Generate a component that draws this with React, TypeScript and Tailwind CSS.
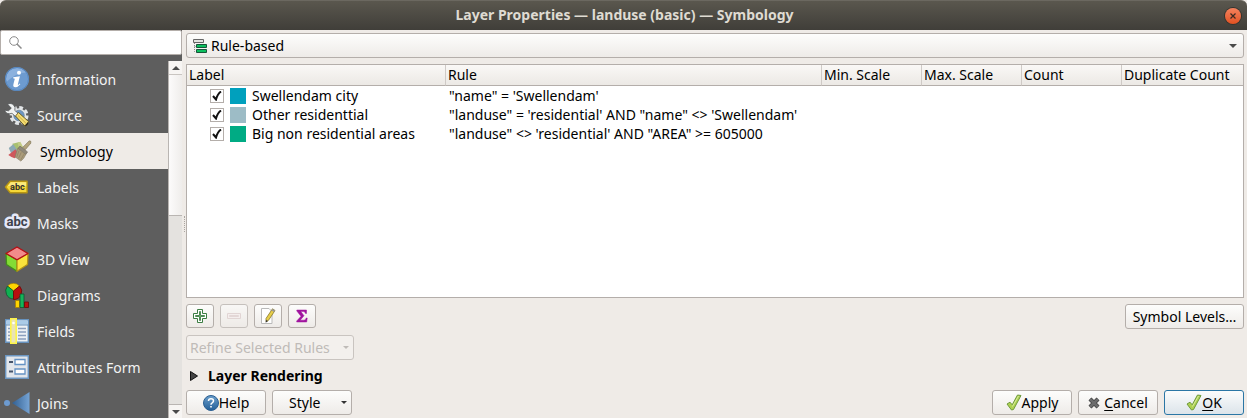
import { useState } from "react";
import type { ReactNode } from "react";

function InfoIcon() {
  return (
    <svg width="24" height="24" viewBox="0 0 24 24" aria-hidden="true">
      <circle cx="12" cy="12" r="12" fill="#6d9bd0" />
      <path d="M1 12A11 11 0 0 1 21 5.800C15 5 8 9 1.500 15Z" fill="#8bb1de" />
      <circle cx="12" cy="12" r="11.500" fill="none" stroke="#5586bf" />
      <circle cx="14" cy="5.700" r="2" fill="#fff" />
      <path d="M8.300 10.200 14.900 9.200 12.900 17.200Q12.700 18.300 13.400 17.700L14.800 16.600 15.300 17.200Q12.800 20.200 10.300 20.200 7.700 20.200 8.400 17.300L9.800 11.700 8.100 11.300Z" fill="#fff" />
    </svg>
  );
}

function SourceIcon() {
  return (
    <svg width="25" height="24" viewBox="0 0 25 24" aria-hidden="true">
      <circle cx="15" cy="12.500" r="8" fill="none" stroke="#e3e6e8" strokeWidth="3" strokeDasharray="3.800 2.480" />
      <circle cx="15" cy="12.500" r="7.200" fill="#e3e6e8" />
      <circle cx="15" cy="12.500" r="5.300" fill="#6d97c4" stroke="#5b7590" strokeWidth=".6" />
      <path d="M3.500 1Q9-1 11 4.500L10.800 7.500 15 11 12 14 8 10.300Q2.500 12 .500 7.200L4.500 7.800 7.300 5.200Z" fill="#f0f2f2" stroke="#4a4e50" strokeWidth=".7" />
      <path d="M11.500 13 14.500 9.500 24.500 18.500Q24.500 22 21 23.300Z" fill="#f3dc74" stroke="#62541d" strokeWidth=".9" />
      <path d="m14 12.500 8 7.800" stroke="#cfae3a" />
      <path d="m20.500 22.800 3.700-4v2Q23.500 23 20.500 23Z" fill="#222" />
    </svg>
  );
}

function SymbologyIcon() {
  return (
    <svg width="28" height="24" viewBox="0 0 28 24" aria-hidden="true">
      <path d="m6 4 8-2 4 7-9 4Z" fill="#a9c070" />
      <path d="M2 8.500 7 4.500l6 9-8 2Z" fill="#8ba9b5" />
      <path d="m1.500 16.500 8-6.500 4 6-5 4Q5 19 1.500 16.500Z" fill="#cf575c" />
      <path d="m12 3 3-1.500 3 6-4 3Z" fill="#c2cc85" />
      <path d="M24.800.700Q27.500.200 26.700 3.200L20.500 10.500 17.500 8Z" fill="#b3a47c" stroke="#81765b" strokeWidth=".7" />
      <path d="m14.500 6.500 8.500 6.500-2 3-8.500-7Z" fill="#90897a" stroke="#6d675c" strokeWidth=".7" />
      <path d="m12 9 9 7Q19 21 15.500 23.300L9 18.500Q10.500 14 12 9Z" fill="#ab9c7b" stroke="#827961" strokeWidth=".7" />
      <path d="m13.500 11.500-2.500 7m5-5-3 6.500m6-4.500L15.500 22" stroke="#887c60" strokeWidth=".7" />
    </svg>
  );
}

function LabelsIcon() {
  return (
    <svg width="26" height="24" viewBox="0 0 26 24" aria-hidden="true">
      <path d="M6.500 6H24v12H6.500L1.500 12Z" fill="#f5d738" stroke="#b89612" strokeWidth="1.400" strokeLinejoin="round" />
      <path d="M7 7h16v4H4Z" fill="#fbea7c" />
      <text x="14" y="15" textAnchor="middle" fontFamily="Roboto, sans-serif" fontSize="9.500" fontWeight="700" fill="#333">abc</text>
    </svg>
  );
}

function MasksIcon() {
  return (
    <svg width="28" height="24" viewBox="0 0 28 24" aria-hidden="true" className="shrink-0">
      <text x="14" y="15" textAnchor="middle" fontFamily="Roboto, sans-serif" fontSize="13" fontWeight="700" fill="#3e424b" stroke="#e6e9f8" strokeWidth="5" strokeLinejoin="round" paintOrder="stroke">abc</text>
    </svg>
  );
}

function CubeIcon() {
  return (
    <svg width="24" height="26" viewBox="0 0 24 26" aria-hidden="true" strokeLinejoin="round" strokeWidth="1.300">
      <path d="M1 7.500 12 14v11.300L1.500 18.500Z" fill="#83dc35" stroke="#43901a" />
      <path d="M23 7.500 12 14v11.300L22.500 18.500Z" fill="#fae33c" stroke="#b49416" />
      <path d="M12 1 23 7.500 12 13.700 1 7.500Z" fill="#f18b8b" stroke="#b50e14" />
    </svg>
  );
}

function DiagramsIcon() {
  return (
    <svg width="24" height="25" viewBox="0 0 24 25" aria-hidden="true">
      <path d="M8.500 8 2.500 3A8 8 0 0 1 14.500 3Z" fill="#ffd500" stroke="#a5820a" strokeWidth=".7" />
      <path d="M8.500 8v8A8 8 0 0 1 2.500 3Z" fill="#10b052" stroke="#10542d" strokeWidth=".8" />
      <path d="M8.500 8v8.500A8 8 0 0 0 14.500 3Z" fill="#b80f0f" stroke="#690606" strokeWidth=".8" />
      <path d="M10.500 17.500h4v7h-4z" fill="#ffd500" stroke="#a88007" strokeWidth=".8" />
      <path d="M15 11h4v13.500h-4z" fill="#14b45a" stroke="#10542d" strokeWidth=".8" />
      <path d="M19.500 19h4v5.500h-4z" fill="#b80f0f" stroke="#690606" strokeWidth=".8" />
    </svg>
  );
}

function FieldsIcon() {
  return (
    <svg width="24" height="26" viewBox="0 0 24 26" aria-hidden="true">
      <path d="M.7 1.700h22.600v22.600H.7z" fill="#eef1f4" stroke="#6792bd" strokeWidth="1.400" />
      <path d="M1.500 2.500h21v4h-21z" fill="#aacbe8" />
      <path d="M1 7h22" stroke="#6792bd" />
      <path d="M3 10.500h18M3 14h18M3 17.500h18M3 21h18" stroke="#8b9fbd" strokeWidth="1.300" strokeDasharray="9 1" />
      <path d="M5.800.800h5.400v24.400H5.800z" fill="#e9e3b5" stroke="#fcf34a" strokeWidth="1.600" />
      <circle cx="8.500" cy="5" r="1.300" fill="#fff" />
    </svg>
  );
}

function FormIcon() {
  return (
    <svg width="24" height="24" viewBox="0 0 24 24" aria-hidden="true">
      <path d="M.7.7h22.600v22.600H.7z" fill="#e2e6eb" stroke="#6c96c1" strokeWidth="1.400" />
      <path d="M10 4.500h10v5H10zM10 14h10v5H10z" fill="#fff" stroke="#6592c4" strokeWidth="1.300" />
      <path d="M4 7h4M4 16.500h4" stroke="#45546b" strokeWidth="2" />
    </svg>
  );
}

function JoinsIcon() {
  return (
    <svg width="28" height="24" viewBox="0 0 28 24" aria-hidden="true" className="shrink-0">
      <defs>
        <linearGradient id="join-fill">
          <stop stopColor="#315f91" />
          <stop offset="1" stopColor="#75a3d4" />
        </linearGradient>
      </defs>
      <circle cx="4" cy="12" r="3" fill="#6d9bd0" />
      <path d="M26.500 1v22L9 12Z" fill="url(#join-fill)" />
    </svg>
  );
}

function CheckIcon() {
  return (
    <svg width="16" height="17" viewBox="0 0 16 17" aria-hidden="true">
      <path d="M1 10 4 8.200 6.200 10.800 11.500 1 15 1.500 7.500 15.500 5.500 16Z" fill="#add152" stroke="#6f9a3c" strokeLinejoin="round" />
      <path d="m6.500 12.500 6-10.500" stroke="#d8ea9e" />
    </svg>
  );
}

function CrossIcon() {
  return (
    <svg width="12" height="12" viewBox="0 0 12 12" aria-hidden="true">
      <path d="m2 2 8 8m0-8-8 8" stroke="#3f3f3f" strokeWidth="4.200" />
      <path d="m2 2 8 8m0-8-8 8" stroke="#6c6c6c" strokeWidth="2.700" />
    </svg>
  );
}

function HelpIcon() {
  return (
    <svg width="16" height="16" viewBox="0 0 16 16" aria-hidden="true">
      <defs>
        <linearGradient id="help-fill" x2="0" y2="1">
          <stop stopColor="#6c9fcb" />
          <stop offset="1" stopColor="#235f98" />
        </linearGradient>
      </defs>
      <circle cx="8" cy="8" r="7.500" fill="url(#help-fill)" stroke="#2b5f92" />
      <path d="M5.500 6Q5.500 3.800 8 3.800T10.500 6Q10.500 7 9.200 7.800 8 8.500 8 9.800" fill="none" stroke="#fff" strokeWidth="1.500" />
      <path d="M7.200 11h1.600v1.600H7.200z" fill="#fff" />
    </svg>
  );
}

function RuleIcon() {
  return (
    <svg width="14" height="14" viewBox="0 0 14 14" aria-hidden="true">
      <path d="M.5.500h10v3H.5z" fill="#e3e3df" stroke="#666" />
      <path d="M1.500 4v8.500H4M1.500 7.500H4" fill="none" stroke="#888" strokeDasharray="1 1" />
      <path d="M3.500 5.500h10v3h-10zM3.500 10.500h10v3h-10z" fill="#0cc05e" stroke="#17553a" />
    </svg>
  );
}

function PlusIcon() {
  return (
    <svg width="14" height="14" viewBox="0 0 14 14" aria-hidden="true">
      <path d="M4.500.500h5v4h4v5h-4v4h-5v-4h-4v-5h4z" fill="#fff" stroke="#3c7d43" />
      <path d="M6.500 2.500h1v4h4v1h-4v4h-1v-4h-4v-1h4z" fill="#8fca94" stroke="#4d8b53" />
    </svg>
  );
}

function MinusIcon() {
  return (
    <svg width="14" height="14" viewBox="0 0 14 14" aria-hidden="true">
      <path d="M.5 4.500h13v5H.5z" fill="#f7f0f0" stroke="#dccccc" />
      <path d="M2.500 6.500h9v1h-9z" fill="none" stroke="#dfcfcf" />
    </svg>
  );
}

function EditIcon() {
  return (
    <svg width="16" height="16" viewBox="0 0 16 16" aria-hidden="true">
      <path d="M1.500.500h7.500l3 3v12H1.500z" fill="#fff" stroke="#b9b9b9" />
      <path d="m12.500.800 2.500 1.700-6.500 9.800L6 13.800 6 10.500Z" fill="#e8cf4a" stroke="#857529" strokeWidth=".8" />
      <path d="m12.500.800 2.500 1.700-1 1.600-2.500-1.700Z" fill="#999" />
      <path d="m6 12-.3 2.800L8 13Z" fill="#333" />
    </svg>
  );
}

function SigmaIcon() {
  return (
    <svg width="12" height="14" viewBox="0 0 12 14" aria-hidden="true">
      <path d="M.8 1h9.700v3.500H9.500Q9.200 2.600 7.500 2.600H4.800L8 6.700 4.200 11.200H8Q9.800 11.200 10.200 9H11.200L10.700 13H.7V12L5 7.300.8 2Z" fill="#a0149f" stroke="#a0149f" strokeWidth=".5" />
    </svg>
  );
}

function Caret({ up = false }: { up?: boolean }) {
  return (
    <svg width="8" height="4" viewBox="0 0 8 4" aria-hidden="true">
      <path d={up ? "M0 4h8L4 0Z" : "M0 0h8L4 4Z"} fill="currentColor" />
    </svg>
  );
}

const sections: { name: string; icon: ReactNode }[] = [
  { name: "Information", icon: <InfoIcon /> },
  { name: "Source", icon: <SourceIcon /> },
  { name: "Symbology", icon: <SymbologyIcon /> },
  { name: "Labels", icon: <LabelsIcon /> },
  { name: "Masks", icon: <MasksIcon /> },
  { name: "3D View", icon: <CubeIcon /> },
  { name: "Diagrams", icon: <DiagramsIcon /> },
  { name: "Fields", icon: <FieldsIcon /> },
  { name: "Attributes Form", icon: <FormIcon /> },
  { name: "Joins", icon: <JoinsIcon /> },
];

const rules = [
  { label: "Swellendam city", swatch: "bg-[#00a0bd]", rule: "\"name\" = 'Swellendam'" },
  { label: "Other residenttial", swatch: "bg-[#9dbcc6]", rule: "\"landuse\" = 'residential' AND \"name\" <> 'Swellendam'" },
  { label: "Big non residential areas", swatch: "bg-[#00ab84]", rule: "\"landuse\" <> 'residential' AND \"AREA\" >= 605000" },
];

const columns = ["Label", "Rule", "Min. Scale", "Max. Scale", "Count", "Duplicate Count"];

const face = "flex items-center rounded-[3px] border border-[#b4aeaa] bg-linear-to-b from-[#fdfdfc] to-[#eeebe8]";

function Sidebar() {
  const [active, setActive] = useState("Symbology");
  return (
    <aside className="flex w-[182px] shrink-0 flex-col bg-[#5e5e5e]">
      <label className="flex h-[25px] shrink-0 items-center rounded-xs border border-[#b4aeaa] bg-white pl-2 text-[#8a8a8a]">
        <svg width="13" height="13" viewBox="0 0 13 13" fill="none" stroke="currentColor" aria-hidden="true">
          <circle cx="5" cy="5" r="4.300" />
          <path d="m8 8 4.500 4.500" strokeWidth="1.500" />
        </svg>
        <input type="search" aria-label="Search" className="min-w-0 flex-1 bg-transparent px-1 text-black outline-none" />
      </label>
      <div className="flex min-h-0 flex-1 pt-1.5">
        <nav className="min-w-0 flex-1 overflow-y-auto [scrollbar-width:none]">
          {sections.map(({ name, icon }) => (
            <button
              key={name}
              type="button"
              onClick={() => setActive(name)}
              className={
                active === name
                  ? "flex h-9 w-full items-center gap-2 bg-[#efebe7] pl-[7px] text-left whitespace-nowrap text-black"
                  : "flex h-9 w-full items-center gap-2 pl-1 text-left whitespace-nowrap text-[#f3f3f3]"
              }
            >
              <span className="flex w-[25px] shrink-0 justify-center">{icon}</span>
              <span className="pt-0.5">{name}</span>
            </button>
          ))}
        </nav>
        <div className="flex w-3.5 shrink-0 flex-col border-l border-[#b9b5b2] bg-[#e4e2df] text-[#4a4a4a]">
          <button type="button" aria-label="Scroll up" className="flex h-3.5 shrink-0 items-center justify-center border-b border-[#c9c5c1] bg-[#f7f5f3]">
            <Caret up />
          </button>
          <div className="min-h-0 flex-1">
            <div className="h-[43%] border-b border-[#b9b5b2] bg-linear-to-r from-[#fcfbfb] to-[#efedeb]" />
          </div>
          <button type="button" aria-label="Scroll down" className="flex h-3.5 shrink-0 items-center justify-center border-t border-[#b9b5b2] bg-[#f7f5f3]">
            <Caret />
          </button>
        </div>
      </div>
    </aside>
  );
}

function RuleTable() {
  return (
    <div className="min-h-0 flex-1 overflow-hidden border border-[#b4aeaa] bg-white">
      <table className="w-full table-fixed border-separate border-spacing-0 text-left whitespace-nowrap">
        <colgroup>
          <col className="w-[259px]" />
          <col className="w-[376px]" />
          <col className="w-[100px]" />
          <col className="w-[100px]" />
          <col className="w-[100px]" />
          <col />
        </colgroup>
        <thead>
          <tr className="bg-linear-to-b from-[#faf8f6] to-[#ebe8e4]">
            {columns.map((name) => (
              <th key={name} scope="col" className="h-[21px] border-r border-b border-r-[#cfcac6] border-b-[#b4aeaa] p-0 pl-0.5 leading-5 font-normal last:border-r-0">
                {name}
              </th>
            ))}
          </tr>
        </thead>
        <tbody>
          {rules.map(({ label, swatch, rule }) => (
            <tr key={label}>
              <td className="h-[19px] p-0">
                <label className="flex h-[19px] items-center pl-[23px]">
                  <span className="grid size-3.5 place-items-center">
                    <input type="checkbox" defaultChecked className="peer col-start-1 row-start-1 size-3.5 appearance-none border border-[#b4aeaa] bg-white" />
                    <svg width="10" height="10" viewBox="0 0 10 10" fill="none" stroke="#111" strokeWidth="2" aria-hidden="true" className="pointer-events-none col-start-1 row-start-1 hidden peer-checked:block">
                      <path d="M1 5 4 8.500Q5.500 3 9 .500" />
                    </svg>
                  </span>
                  <span className={`mr-1.5 ml-1.5 size-4 ${swatch}`} />
                  {label}
                </label>
              </td>
              <td className="p-0 pl-[3px]"><span className="flex h-[19px] items-center">{rule}</span></td>
              <td className="p-0" />
              <td className="p-0" />
              <td className="p-0" />
              <td className="p-0" />
            </tr>
          ))}
        </tbody>
      </table>
    </div>
  );
}

export default function App() {
  return (
    <div className="flex h-screen flex-col overflow-hidden bg-[#efebe7] font-['Noto_Sans',sans-serif] text-sm leading-5 text-black">
      <header className="flex h-[30px] shrink-0 items-center rounded-t-md border-t border-[#6b6860] bg-linear-to-b from-[#5a574e] to-[#403e39] pr-1.5 pl-6">
        <h1 className="flex-1 pb-0.5 text-center font-bold text-[#dfdbd2]">Layer Properties — landuse (basic) — Symbology</h1>
        <button type="button" aria-label="Close" className="flex size-4 items-center justify-center rounded-full bg-linear-to-b from-[#f5825d] to-[#e2511f] ring-1 ring-[#35332e]">
          <svg width="6" height="6" viewBox="0 0 6 6" stroke="#3b2a22" strokeWidth="1.200" aria-hidden="true">
            <path d="m.5.500 5 5m0-5-5 5" />
          </svg>
        </button>
      </header>
      <div className="flex min-h-0 flex-1">
        <Sidebar />
        <div className="flex w-1 shrink-0 items-center">
          <div className="ml-0.5 h-4 border-l border-dotted border-[#aaa5a0]" />
        </div>
        <main className="flex min-w-0 flex-1 flex-col pt-[3px] pr-[3px] pb-[3px]">
          <div className="mb-1.5 grid shrink-0 items-center">
            <select aria-label="Renderer" className="col-start-1 row-start-1 h-[25px] w-full appearance-none rounded-[3px] border border-[#b4aeaa] bg-linear-to-b from-[#fdfdfc] to-[#eeebe8] pr-6 pl-6">
              <option>Rule-based</option>
            </select>
            <span className="pointer-events-none col-start-1 row-start-1 flex items-center justify-between pr-[7px] pl-[7px] text-[#4a4a4a]">
              <RuleIcon />
              <Caret />
            </span>
          </div>
          <RuleTable />
          <div className="mt-1.5 flex shrink-0 items-start gap-1.5">
            <button type="button" aria-label="Add rule" className={`${face} h-6 w-7 justify-center`}><PlusIcon /></button>
            <button type="button" aria-label="Remove rule" disabled className={`${face} h-6 w-7 justify-center opacity-70`}><MinusIcon /></button>
            <button type="button" aria-label="Edit rule" className={`${face} h-6 w-7 justify-center`}><EditIcon /></button>
            <button type="button" aria-label="Count features" className={`${face} h-6 w-7 justify-center`}><SigmaIcon /></button>
            <button type="button" className={`${face} ml-auto h-[25px] w-[119px] justify-center`}>Symbol Levels…</button>
          </div>
          <button type="button" disabled className="mt-1.5 flex h-[25px] w-[168px] shrink-0 items-center justify-between rounded-[3px] border border-[#c9c4c0] bg-[#f3f0ed] pr-1 pl-[3px] whitespace-nowrap text-[#bfbbb8]">
            Refine Selected Rules
            <svg width="6" height="3" viewBox="0 0 6 3" aria-hidden="true"><path d="M0 0h6L3 3Z" fill="currentColor" /></svg>
          </button>
          <button type="button" aria-expanded="false" className="mt-1.5 flex shrink-0 items-center gap-2.5 pl-1 text-left font-bold">
            <svg width="8" height="10" viewBox="0 0 8 10" aria-hidden="true"><path d="M.5.500v9l7-4.500Z" fill="#444" stroke="#111" /></svg>
            Layer Rendering
          </button>
          <footer className="mt-1 flex shrink-0 gap-1.5">
            <button type="button" className={`${face} h-[25px] w-20 justify-center`}><HelpIcon />Help</button>
            <button type="button" aria-haspopup="menu" className={`${face} mr-auto h-[25px] w-20 justify-between pr-1 pl-4`}>
              Style
              <svg width="6" height="3" viewBox="0 0 6 3" aria-hidden="true"><path d="M0 0h6L3 3Z" fill="#333" /></svg>
            </button>
            <button type="button" className={`${face} h-[25px] w-20 justify-center`}><CheckIcon />Apply</button>
            <button type="button" className={`${face} h-[25px] w-20 justify-center gap-1`}><CrossIcon /><span><u className="underline-offset-2">C</u>ancel</span></button>
            <button type="button" className="flex h-[25px] w-20 items-center justify-center rounded-[3px] border border-[#2a76a5] bg-linear-to-b from-[#fbfcfc] to-[#dce4ea]"><CheckIcon /><span><u className="underline-offset-2">O</u>K</span></button>
          </footer>
        </main>
      </div>
    </div>
  );
}
